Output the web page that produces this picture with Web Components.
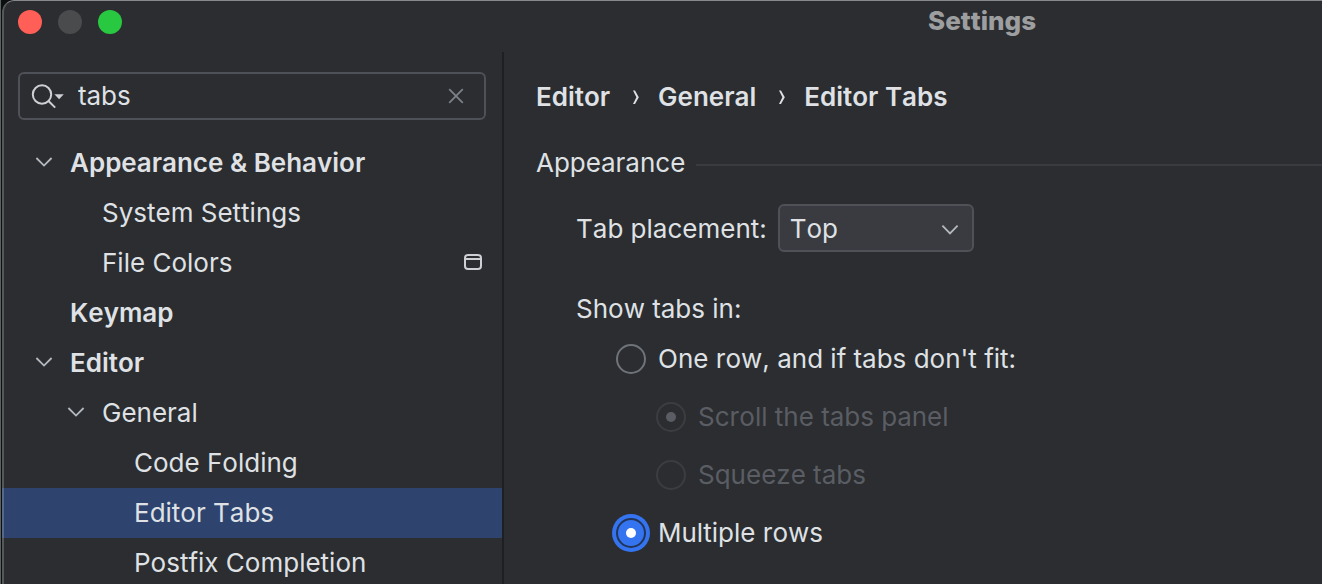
<!DOCTYPE html>
<html lang="en">
<head>
<meta charset="utf-8">
<meta name="viewport" content="width=device-width, initial-scale=1">
<title>Settings</title>
<style>
  :root {
    --bg: #2b2d30;
    --text: #dfe1e5;
    --muted: #5a5d63;
    --line: #393b40;
    --border: #4e5157;
    --divider: #1e1f22;
    --icon: #ced0d6;
    --selection: #2e436e;
    --accent: #3574f0;
  }
  body {
    margin: 0;
    background: #0b0f10;
    color: var(--text);
    font: 400 26px/32px Inter, "Liberation Sans", sans-serif;
    font-kerning: none;
  }
</style>
</head>
<body>
<settings-window>
  <title-bar slot="title">Settings</title-bar>
  <side-panel slot="side">
    <search-field slot="search" value="tabs"></search-field>
    <tree-row level="0" open>Appearance &amp; Behavior</tree-row>
    <tree-row level="1">System Settings</tree-row>
    <tree-row level="1" project>File Colors</tree-row>
    <tree-row level="0">Keymap</tree-row>
    <tree-row level="0" open>Editor</tree-row>
    <tree-row level="1" open>General</tree-row>
    <tree-row level="2">Code Folding</tree-row>
    <tree-row level="2" selected>Editor Tabs</tree-row>
    <tree-row level="2">Postfix Completion</tree-row>
  </side-panel>
  <bread-crumbs></bread-crumbs>
  <titled-group heading="Appearance">
    <tab-options></tab-options>
  </titled-group>
</settings-window>

<script>
  const define = (name, html, setup) => {
    const template = document.createElement('template');
    template.innerHTML = `<style>*{box-sizing:border-box}</style>` + html;
    customElements.define(name, class extends HTMLElement {
      constructor() {
        super();
        this.attachShadow({ mode: 'open' }).append(template.content.cloneNode(true));
      }
      connectedCallback() {
        if (setup) setup(this, this.shadowRoot);
      }
    });
  };

  define('settings-window', `
    <style>
      :host { display: flex; height: 100vh; overflow: hidden; border-left: 1px solid #5b6062; padding-left: 1px; box-sizing: border-box; }
      .frame { position: relative; flex: 1; min-width: 0; display: flex; flex-direction: column; background: var(--bg); border-top-left-radius: 12px; overflow: hidden; }
      .frame::after { content: ""; position: absolute; inset: 0; border-left: 2px solid rgba(255,255,255,.2); border-top: 1px solid rgba(255,255,255,.44); border-top-left-radius: 12px; pointer-events: none; }
      .body { flex: 1; min-height: 0; display: flex; }
      main { flex: 1; min-width: 0; padding: 29px 0 0 32px; }
    </style>
    <div class="frame">
      <slot name="title"></slot>
      <div class="body">
        <slot name="side"></slot>
        <main><slot></slot></main>
      </div>
    </div>`);

  define('title-bar', `
    <style>
      :host { display: block; flex: none; }
      header { display: flex; height: 52px; padding: 5px 0 0 16px; }
      .lights { display: flex; gap: 16px; width: 910px; padding-top: 5px; flex: none; }
      button { width: 24px; height: 24px; padding: 0; border: 0; border-radius: 50%; }
      .close { background: #ff5f57; }
      .min { background: #4a4b4d; }
      .zoom { background: #28c840; }
      h1 { margin: 0; font-size: 26px; line-height: 32px; font-weight: 800; color: #9d9ea0; }
    </style>
    <header>
      <div class="lights">
        <button class="close" aria-label="Close"></button>
        <button class="min" aria-label="Minimize" disabled></button>
        <button class="zoom" aria-label="Zoom"></button>
      </div>
      <h1><slot></slot></h1>
    </header>`);

  define('side-panel', `
    <style>
      :host { display: block; flex: none; width: 502px; border-right: 2px solid var(--divider); box-sizing: border-box; overflow: hidden; }
      .search { padding: 20px 16px 18px; }
    </style>
    <div class="search"><slot name="search"></slot></div>
    <nav role="tree" aria-label="Settings"><slot></slot></nav>`);

  define('search-field', `
    <style>
      :host { display: block; }
      .box { display: flex; align-items: center; height: 48px; border: 2px solid var(--border); border-radius: 6px; padding: 0 16px 0 10px; }
      svg { display: block; flex: none; }
      input { flex: 1; min-width: 0; height: 32px; margin: 0 0 0 14px; padding: 0; border: 0; outline: 0; background: none; color: inherit; font: inherit; font-kerning: none; }
      button { width: 24px; height: 24px; padding: 0; border: 0; background: none; }
    </style>
    <div class="box">
      <svg width="34" height="26" viewBox="0 0 34 26" fill="none" aria-hidden="true">
        <circle cx="12" cy="11.5" r="9.2" stroke="#ced0d6" stroke-width="2"/>
        <path d="M18.5 18L25.2 24.6" stroke="#ced0d6" stroke-width="2"/>
        <path d="M24.4 11.3H33.8L29.1 16.3Z" fill="#ced0d6"/>
      </svg>
      <input type="text" aria-label="Search settings" spellcheck="false">
      <button aria-label="Clear">
        <svg width="24" height="24" viewBox="0 0 24 24" fill="none"><path d="M5.2 5.2L18.8 18.8M18.8 5.2L5.2 18.8" stroke="#7d8188" stroke-width="1.8"/></svg>
      </button>
    </div>`, (host, root) => {
      root.querySelector('input').value = host.getAttribute('value') || '';
    });

  define('tree-row', `
    <style>
      :host { display: block; }
      .row { display: flex; align-items: center; height: 50px; padding: 0 18px 0 30px; }
      :host([level="1"]) .row { padding-left: 62px; }
      :host([level="2"]) .row { padding-left: 94px; }
      :host([level="0"]) .label { font-weight: 600; }
      :host([selected]) .row { background: var(--selection); }
      .arrow { flex: none; width: 24px; height: 24px; margin-right: 14px; visibility: hidden; }
      :host([open]) .arrow { visibility: visible; }
      .label { flex: 1; white-space: nowrap; }
      .project { display: none; flex: none; }
      :host([project]) .project { display: block; }
    </style>
    <div class="row">
      <svg class="arrow" viewBox="0 0 24 24" fill="none" aria-hidden="true"><path d="M4.4 7L12 14.6L19.6 7" stroke="#b4b8bf" stroke-width="1.8"/></svg>
      <span class="label"><slot></slot></span>
      <svg class="project" width="20" height="18" viewBox="0 0 20 18" fill="none" aria-hidden="true"><rect x="1" y="1" width="16" height="14" rx="3" stroke="#ced0d6" stroke-width="2"/><path d="M1 5H17" stroke="#ced0d6" stroke-width="2"/></svg>
    </div>`, host => {
      host.setAttribute('role', 'treeitem');
      host.setAttribute('aria-level', Number(host.getAttribute('level')) + 1);
      if (host.hasAttribute('open')) host.setAttribute('aria-expanded', 'true');
    });

  define('bread-crumbs', `
    <style>
      :host { display: block; }
      nav { display: flex; align-items: center; height: 32px; font-weight: 600; }
      a { color: inherit; text-decoration: none; white-space: nowrap; }
      svg { flex: none; width: 48px; height: 24px; }
    </style>
    <nav aria-label="Breadcrumb">
      <a href="#editor">Editor</a>
      <svg viewBox="0 0 48 24" aria-hidden="true"><path d="M23 5.5H25L28.8 12.3L25 19H23L26.4 12.3Z" fill="#dfe1e5"/></svg>
      <a href="#general">General</a>
      <svg viewBox="0 0 48 24" aria-hidden="true"><path d="M23 5.5H25L28.8 12.3L25 19H23L26.4 12.3Z" fill="#dfe1e5"/></svg>
      <a href="#editor-tabs" aria-current="page">Editor Tabs</a>
    </nav>`);

  define('titled-group', `
    <style>
      :host { display: block; margin-top: 34px; }
      .head { display: flex; align-items: center; gap: 11px; height: 32px; }
      h2 { margin: 0; font: inherit; font-kerning: none; }
      .rule { flex: 1; height: 2px; margin-top: 4px; background: var(--line); }
      .content { padding: 25px 0 0 40px; }
    </style>
    <div class="head"><h2></h2><div class="rule"></div></div>
    <div class="content"><slot></slot></div>`, (host, root) => {
      root.querySelector('h2').textContent = host.getAttribute('heading');
    });

  define('tab-options', `
    <style>
      :host { display: block; }
      .place { display: flex; align-items: center; gap: 11px; }
      .place label { padding-top: 2px; }
      .combo { position: relative; width: 196px; }
      select { display: block; appearance: none; width: 100%; height: 48px; margin: 0; padding: 2px 40px 0 10px; border: 2px solid var(--border); border-radius: 6px; background: var(--line); color: inherit; font: inherit; font-kerning: none; }
      .combo svg { position: absolute; right: 12px; top: 12px; pointer-events: none; }
      fieldset { margin: 41px 0 0; padding: 0; border: 0; min-width: 0; }
      legend { padding: 0; }
      .opts { display: flex; flex-direction: column; gap: 26px; padding: 18px 0 0 40px; }
      .opt { display: flex; align-items: center; gap: 12px; height: 32px; white-space: nowrap; }
      .sub { padding-left: 40px; color: var(--muted); }
      input { appearance: none; flex: none; display: grid; place-items: center; width: 30px; height: 30px; margin: 0; border: 2px solid #6f737a; border-radius: 50%; }
      input:checked::before { content: ""; width: 10px; height: 10px; border-radius: 50%; background: #fff; }
      input:checked { background: var(--accent); border-color: #223558; box-shadow: 0 0 0 4px var(--accent); }
      input:disabled { background: none; border-color: #3b3d41; box-shadow: none; }
      input:disabled::before { background: var(--muted); }
    </style>
    <div class="place">
      <label for="placement">Tab placement:</label>
      <div class="combo">
        <select id="placement"><option>Top</option><option>Bottom</option><option>Left</option><option>Right</option><option>None</option></select>
        <svg width="24" height="24" viewBox="0 0 24 24" fill="none" aria-hidden="true"><path d="M4.4 9.6L12 17.4L19.6 9.6" stroke="#b4b8bf" stroke-width="1.8"/></svg>
      </div>
    </div>
    <fieldset>
      <legend>Show tabs in:</legend>
      <div class="opts">
        <div class="opt"><input type="radio" name="rows" id="one"><label for="one">One row, and if tabs don't fit:</label></div>
        <div class="opt sub"><input type="radio" name="overflow" id="scroll" checked disabled><label for="scroll">Scroll the tabs panel</label></div>
        <div class="opt sub"><input type="radio" name="overflow" id="squeeze" disabled><label for="squeeze">Squeeze tabs</label></div>
        <div class="opt"><input type="radio" name="rows" id="multi" checked><label for="multi">Multiple rows</label></div>
      </div>
    </fieldset>`);
</script>
</body>
</html>
